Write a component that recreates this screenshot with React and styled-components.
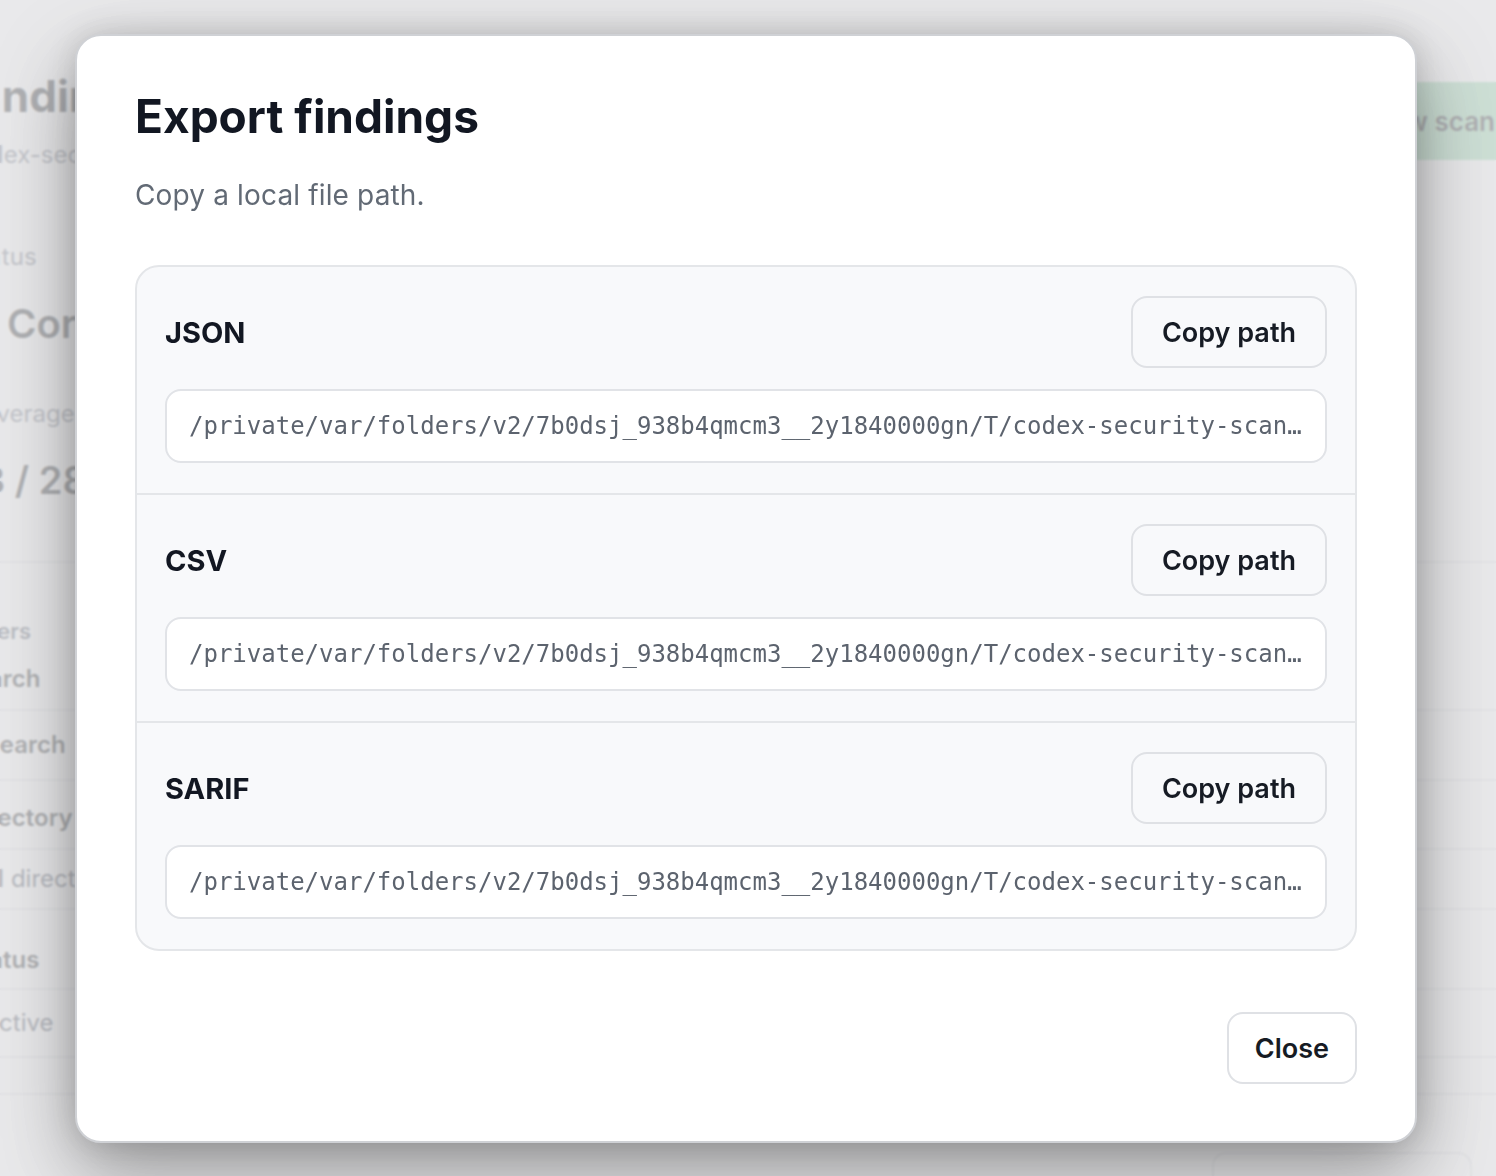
import React from 'react'
import styled, { createGlobalStyle } from 'styled-components'

const GlobalStyle = createGlobalStyle`
  * { box-sizing: border-box; }
  html, body { margin: 0; padding: 0; height: 100%; }
  body {
    font-family: Inter, "Noto Sans", sans-serif;
    background: #fff;
    overflow: hidden;
    -webkit-font-smoothing: antialiased;
  }
`;

const scanDir = '/private/var/folders/v2/7b0dsj_938b4qmcm3__2y1840000gn/T/codex-security-scan-20250114-093512'

const formats = [
  { name: 'JSON', path: `${scanDir}/findings.json` },
  { name: 'CSV', path: `${scanDir}/findings.csv` },
  { name: 'SARIF', path: `${scanDir}/findings.sarif` },
]

const filterRows = [
  { label: 'Research', strong: true, h: 70, indent: -8 },
  { label: 'Directory', strong: true, h: 69, shift: 6 },
  { label: 'Full directory', h: 60 },
  { label: 'Status', strong: true, h: 80, shift: 22 },
  { label: 'Inactive', h: 68 },
  { label: '', h: 37 },
]

/* ---------- page behind the dialog ---------- */

const Page = styled.div`
  position: fixed;
  inset: 0;
  overflow: hidden;
  background: #fff;
  color: #1b1f24;
`;

const PageHeader = styled.header`
  display: flex;
  justify-content: space-between;
  align-items: flex-start;
  padding-top: 70px;
  margin: 0 -27px 0 -36px;
`;

const PageTitle = styled.h1`
  margin: 0;
  font-size: 44px;
  line-height: 53px;
  font-weight: 700;
`;

const PageSub = styled.div`
  margin: 15px 0 0 -3px;
  font-size: 24px;
  line-height: 34px;
  color: #6b7280;
`;

const NewScan = styled.button`
  margin-top: 12px;
  height: 78px;
  padding: 0 28px;
  border: none;
  border-radius: 16px;
  background: #8fd6a8;
  color: #1b1f24;
  font: 600 26px Inter, sans-serif;
`;

const Content = styled.div`
  margin-left: -35px;
`;

const StatLabel = styled.div`
  margin-top: ${p => p.$gap}px;
  font-size: 24px;
  line-height: 34px;
  color: #6b7280;
`;

const StatValue = styled.div`
  display: flex;
  align-items: center;
  gap: 12px;
  margin-top: ${p => p.$gap}px;
  font-size: ${p => p.$size}px;
  line-height: 1.2;
  font-weight: 600;
`;

const StatusDot = styled.span`
  width: 30px;
  height: 30px;
  border-radius: 50%;
  background: #16a34a;
`;

const FilterBlock = styled.section`
  margin-top: 57px;
  border-top: 2px solid #e2e4e8;
  padding: 53px 0 13px;
`;

const FilterTitle = styled.div`
  font-size: 22px;
  line-height: 30px;
  font-weight: 600;
  color: #4b5563;
`;

const FilterLabel = styled.div`
  margin: 16px 0 0 -6px;
  font-size: 24px;
  line-height: 34px;
  font-weight: 600;
`;

const Row = styled.div`
  display: flex;
  align-items: center;
  height: ${p => p.$h}px;
  padding-top: ${p => p.$shift || 0}px;
  padding-left: ${p => p.$indent || 0}px;
  border-top: 2px solid #e2e4e8;
  font-size: 24px;
  font-weight: ${p => (p.$strong ? 600 : 400)};
  color: ${p => (p.$strong ? '#1b1f24' : '#374151')};
`;

const RowText = styled.span`
  margin-left: ${p => p.$indent || 0}px;
`;

const FooterRow = styled.div`
  display: flex;
  justify-content: flex-end;
  border-top: 2px solid #e2e4e8;
  padding: 57px 24px 0 0;
`;

const Pager = styled.div`
  width: 260px;
  height: 64px;
  border: 2px solid #dfe1e5;
  border-radius: 14px;
  background: #fff;
`;

/* ---------- dialog ---------- */

const Scrim = styled.div`
  position: fixed;
  inset: 0;
  background: rgba(225, 226, 228, 0.75);
  backdrop-filter: blur(1px);
`;

const Dialog = styled.div`
  display: flex;
  flex-direction: column;
  width: 1342px;
  margin: 34px 0 0 75px;
  padding: 53px 58px 57px;
  background: #fff;
  border: 2px solid #cfd1d5;
  border-radius: 26px;
  box-shadow: 0 30px 80px rgba(0, 0, 0, 0.36), 0 0 30px rgba(0, 0, 0, 0.14);
`;

const Title = styled.h2`
  margin: 0;
  font-size: 46px;
  line-height: 55px;
  font-weight: 700;
  color: #121722;
`;

const Subtitle = styled.p`
  margin: 32px 0 0;
  font-size: 28px;
  line-height: 38px;
  letter-spacing: 0.15px;
  color: #626a75;
`;

const FormatList = styled.div`
  margin-top: 51px;
  border: 2px solid #e4e6e9;
  border-radius: 24px;
  background: #f8f9fb;
  overflow: hidden;
`;

const FormatSection = styled.div`
  padding: 29px 28px 30px;
  & + & {
    border-top: 2px solid #e4e6e9;
  }
`;

const SectionHead = styled.div`
  display: flex;
  justify-content: space-between;
  align-items: center;
`;

const FormatName = styled.h3`
  margin: 0;
  font-size: 29px;
  font-weight: 700;
  color: #121722;
`;

const Button = styled.button`
  height: 72px;
  padding: 0 ${p => p.$pad}px;
  border: 2px solid #dfe1e5;
  border-radius: 16px;
  background: ${p => (p.$flat ? '#fff' : '#f8f9fb')};
  color: #161b24;
  font: 600 27px Inter, sans-serif;
  cursor: pointer;
`;

const PathField = styled.div`
  margin-top: 21px;
  height: 74px;
  padding: 0 20px 0 22px;
  border: 2px solid #e1e3e7;
  border-radius: 16px;
  background: #fff;
  font-family: "DejaVu Sans Mono", "Liberation Mono", monospace;
  font-size: 24px;
  line-height: 70px;
  color: #5c636e;
  white-space: nowrap;
  overflow: hidden;
  text-overflow: ellipsis;
`;

const Footer = styled.div`
  display: flex;
  justify-content: flex-end;
  margin-top: 61px;
`;

const FindingsPage = () => (
  <Page>
    <PageHeader>
      <div>
        <PageTitle>Findings</PageTitle>
        <PageSub>codex-security-scan-20250114-093512</PageSub>
      </div>
      <NewScan>New scan</NewScan>
    </PageHeader>
    <Content>
      <StatLabel $gap={68}>Status</StatLabel>
      <StatValue $gap={26} $size={40}>
        <StatusDot />
        Core complete
      </StatValue>
      <StatLabel $gap={49}>Coverage</StatLabel>
      <StatValue $gap={27} $size={38}>13 / 28</StatValue>
      <FilterBlock>
        <FilterTitle>Filters</FilterTitle>
        <FilterLabel>Search</FilterLabel>
      </FilterBlock>
      {filterRows.map((r, i) => (
        <Row key={i} $h={r.h} $strong={r.strong} $shift={r.shift}>
          <RowText $indent={r.indent}>{r.label}</RowText>
        </Row>
      ))}
      <FooterRow>
        <Pager />
      </FooterRow>
    </Content>
  </Page>
)

const App = () => (
  <>
    <GlobalStyle />
    <FindingsPage />
    <Scrim>
      <Dialog role="dialog" aria-labelledby="export-title">
        <Title id="export-title">Export findings</Title>
        <Subtitle>Copy a local file path.</Subtitle>
        <FormatList>
          {formats.map(f => (
            <FormatSection key={f.name}>
              <SectionHead>
                <FormatName>{f.name}</FormatName>
                <Button $pad={29}>Copy path</Button>
              </SectionHead>
              <PathField title={f.path}>{f.path}</PathField>
            </FormatSection>
          ))}
        </FormatList>
        <Footer>
          <Button $flat $pad={26}>Close</Button>
        </Footer>
      </Dialog>
    </Scrim>
  </>
)

export default App
